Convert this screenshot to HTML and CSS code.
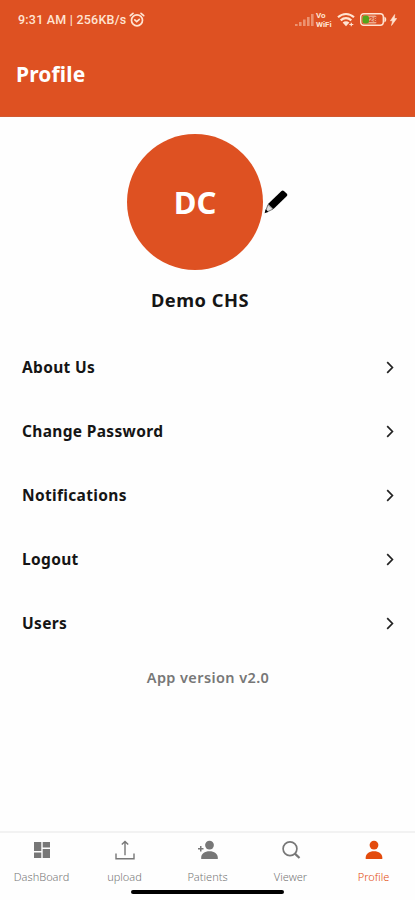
FILE: index.html
```html
<!DOCTYPE html>
<html lang="en">
<head>
<meta charset="utf-8">
<title>Profile</title>
<link rel="stylesheet" href="styles.css">
</head>
<body>
<div class="app">
  <header class="header">
    <div class="status">
      <span class="status-text">9:31 AM | 256KB/s</span>
      <svg class="alarm" width="16" height="16" viewBox="0 0 16 16" fill="none" stroke="currentColor" stroke-width="1.700" stroke-linecap="round"><circle cx="8" cy="8.300" r="5.500"/><path d="M1.300 3.700 4 1.300M14.700 3.700 12 1.300M5.800 7.900 7.700 9.700l2.600-2.400"/></svg>
      <div class="status-icons">
        <svg class="signal" width="19" height="12" viewBox="0 0 19 12" fill="currentColor"><path d="M0 10h2.600v2H0zM4 8h2.600v4H4zM8 5.500h2.600V12H8zM12 3h2.600v9H12zM16 0h2.600v12H16z"/></svg>
        <span class="vowifi"><span>Vo</span><span>WiFi</span></span>
        <svg class="wifi" width="18" height="15" viewBox="0 0 18 15" fill="none" stroke="currentColor" stroke-width="2.200"><path d="M1 5.200c4.800-4.300 11.200-4.300 16 0M3.700 8.300c3.200-2.800 7.400-2.800 10.600 0"/><path d="M5.600 10.400c2-1.600 4.800-1.600 6.800 0L9 14.200z" fill="currentColor" stroke="none"/><path d="M12.300 12.500h4M14.300 10.800v3.400" stroke-width="1.200"/></svg>
        <svg class="battery" width="27" height="13" viewBox="0 0 27 13"><rect x=".7" y=".7" width="22.600" height="11.600" rx="3" fill="none" stroke="#ffe4d2" stroke-width="1.400"/><path d="M24.300 3.500c2.600 1 2.600 5 0 6z" fill="#ffe4d2"/><rect x="2.500" y="2.500" width="14" height="8" rx="1.500" fill="#eda98c"/><rect x="2.500" y="2.500" width="6.500" height="8" rx="2.500" fill="#55a51b"/><text x="8.700" y="9.400" class="battery-value">28</text></svg>
        <svg class="bolt" width="7" height="12" viewBox="0 0 7 12" fill="currentColor"><path d="M4.700.5.400 6.800h2.200L1.500 11.500l5.200-7H4.400z" stroke="currentColor" stroke-width=".6"/></svg>
      </div>
    </div>
    <h1 class="title">Profile</h1>
  </header>
  <main class="main">
    <section class="user">
      <div class="avatar-row">
        <div class="avatar">DC</div>
        <svg class="pencil" width="24" height="24" viewBox="0 0 24 24"><path d="M17.500 1.100q1.200-1 2.400 0l3 2.700q1 1.200 0 2.300L9.500 19 4 14z" fill="#000"/><path d="m4 14.500 5 4.600-6.400 3.100-1-1z" fill="#ddd" stroke="#222" stroke-width=".6"/><path d="m1.700 19.300 2.600 2.500-3.700 1.400z" fill="#000"/></svg>
      </div>
      <h2 class="name">Demo CHS</h2>
    </section>
    <nav class="menu">
      <a class="row"><span>About Us</span><svg class="chevron" viewBox="0 0 8 13"><path d="m1.200 1.200 5.200 5.300-5.200 5.300"/></svg></a>
      <a class="row"><span>Change Password</span><svg class="chevron" viewBox="0 0 8 13"><path d="m1.200 1.200 5.200 5.300-5.200 5.300"/></svg></a>
      <a class="row"><span>Notifications</span><svg class="chevron" viewBox="0 0 8 13"><path d="m1.200 1.200 5.200 5.300-5.200 5.300"/></svg></a>
      <a class="row"><span>Logout</span><svg class="chevron" viewBox="0 0 8 13"><path d="m1.200 1.200 5.200 5.300-5.200 5.300"/></svg></a>
      <a class="row"><span>Users</span><svg class="chevron" viewBox="0 0 8 13"><path d="m1.200 1.200 5.200 5.300-5.200 5.300"/></svg></a>
    </nav>
    <p class="version">App version v2.0</p>
  </main>
  <footer class="tabs">
    <a class="tab"><svg width="20" height="20" viewBox="0 0 20 20" fill="currentColor"><path d="M2 2h7.300v9H2zM10.700 2H18v5.500h-7.300zM2 12.500h7.300V18H2zM10.700 9H18v9h-7.300z"/></svg><span>DashBoard</span></a>
    <a class="tab"><svg width="20" height="20" viewBox="0 0 20 20" fill="none" stroke="currentColor" stroke-width="1.400"><path d="M1 13.500v5.200h18v-5.200M6.800 4.500 10 1.500l3.200 3M10 1.500v13.800"/></svg><span>upload</span></a>
    <a class="tab"><svg width="20" height="20" viewBox="0 0 20 20" fill="currentColor"><circle cx="11.500" cy="5.100" r="4.400"/><path d="M3.200 19v-1.500c0-3.800 3.500-6.300 8.300-6.300s8.300 2.500 8.300 6.300V19zM2 6h1.500v2h2v1.500h-2v2H2v-2H0V8h2z"/></svg><span>Patients</span></a>
    <a class="tab"><svg width="20" height="20" viewBox="0 0 20 20" fill="none" stroke="currentColor" stroke-width="1.700"><circle cx="9" cy="8.700" r="6.900"/><path d="m13.900 13.600 4.600 4.400" stroke-width="2.200"/></svg><span>Viewer</span></a>
    <a class="tab active"><svg width="20" height="20" viewBox="0 0 20 20" fill="currentColor"><circle cx="10" cy="5.100" r="4.400"/><path d="M1.700 19v-1.500c0-3.800 3.500-6.300 8.300-6.300s8.300 2.500 8.300 6.300V19z"/></svg><span>Profile</span></a>
    <div class="home-bar"></div>
  </footer>
</div>
</body>
</html>
```
FILE: styles.css
```css
* {
  box-sizing: border-box;
}

body {
  margin: 0;
  background: #fefefe;
  font-family: "Noto Sans", sans-serif;
  color: #151515;
}

.app {
  display: flex;
  flex-direction: column;
  width: 415px;
  height: 900px;
  overflow: hidden;
}

.header {
  height: 117px;
  background: #de5122;
  border-bottom: 1px solid #d15a32;
  color: #fff;
}

.status {
  display: flex;
  align-items: center;
  height: 39px;
  padding: 0 18px;
  color: #ffe4d2;
  font-family: Roboto, sans-serif;
}

.status-text {
  width: 109px;
  font-size: 12.500px;
  font-weight: 500;
  letter-spacing: 0.220px;
  white-space: nowrap;
}

.alarm {
  margin-left: 2px;
}

.status-icons {
  display: flex;
  align-items: center;
  margin-left: auto;
}

.signal {
  margin-right: 2px;
  opacity: 0.450;
}

.vowifi {
  display: flex;
  flex-direction: column;
  width: 18px;
  margin-right: 3px;
  font-size: 8px;
  font-weight: 700;
  line-height: 9px;
}

.wifi {
  margin-right: 5px;
}

.battery {
  margin-right: 3px;
}

.battery-value {
  fill: #d84b20;
  font: 700 8px Roboto, sans-serif;
}

.title {
  margin: 21px 0 0 16px;
  font-size: 21px;
  line-height: 28px;
  font-weight: 700;
  letter-spacing: 0.150px;
}

.main {
  flex: 1;
}

.user {
  display: flex;
  flex-direction: column;
  padding-top: 17px;
}

.avatar-row {
  display: flex;
  align-items: center;
  margin-left: 127px;
}

.avatar {
  display: flex;
  align-items: center;
  justify-content: center;
  width: 136px;
  height: 136px;
  border-radius: 50%;
  background: #de5122;
  color: #fff;
  font-size: 31px;
  font-weight: 700;
}

.pencil {
  margin-left: 1px;
}

.name {
  align-self: center;
  margin: 17px 15px 0 0;
  font-size: 18.300px;
  line-height: 26px;
  font-weight: 700;
  letter-spacing: 0.500px;
}

.menu {
  margin-top: 21.600px;
}

.row {
  display: flex;
  align-items: center;
  justify-content: space-between;
  height: 64.200px;
  padding: 0 21px 0 22px;
  font-size: 15.500px;
  font-weight: 700;
  letter-spacing: 0.330px;
}

.chevron {
  width: 8px;
  height: 13px;
  margin-top: 1px;
  fill: none;
  stroke: #222;
  stroke-width: 1.700;
}

.version {
  margin: 9px 0 0 1px;
  color: #777;
  font-size: 14.500px;
  line-height: 24px;
  font-weight: 600;
  letter-spacing: 0.400px;
  text-align: center;
}

.tabs {
  position: relative;
  display: flex;
  height: 69px;
  border-top: 2px solid #f2f2f2;
}

.tab {
  display: flex;
  flex: 1;
  flex-direction: column;
  align-items: center;
  padding-top: 7px;
  color: #777;
}

.tab span {
  margin-top: 9px;
  font-size: 11px;
  font-weight: 300;
  line-height: 16px;
}

.active {
  color: #e34b0d;
}

.tabs .active {
  color: #e34b0d;
}

.home-bar {
  position: absolute;
  left: 131px;
  bottom: 6px;
  width: 153px;
  height: 4px;
  border-radius: 2px;
  background: #000;
}
```
